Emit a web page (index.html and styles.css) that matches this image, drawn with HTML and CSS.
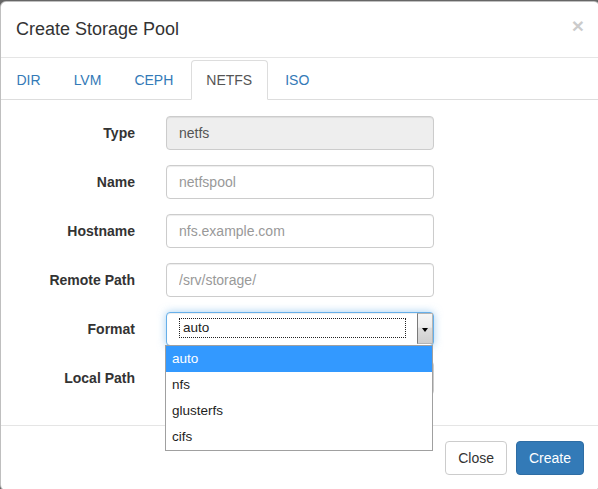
FILE: index.html
```html
<!DOCTYPE html>
<html>
<head>
<meta charset="utf-8">
<title>Create Storage Pool</title>
<link rel="stylesheet" href="styles.css">
</head>
<body>
<div class="modal">
  <div class="modal-header">
    <h4 class="modal-title">Create Storage Pool</h4>
    <span class="close">&times;</span>
  </div>
  <ul class="nav-tabs">
    <li><a href="#">DIR</a></li>
    <li><a href="#">LVM</a></li>
    <li><a href="#">CEPH</a></li>
    <li class="active"><a href="#">NETFS</a></li>
    <li><a href="#">ISO</a></li>
  </ul>
  <div class="modal-body">
    <div class="form-row">
      <label class="label">Type</label>
      <input class="input input-readonly" type="text" value="netfs" readonly>
    </div>
    <div class="form-row">
      <label class="label">Name</label>
      <input class="input" type="text" placeholder="netfspool">
    </div>
    <div class="form-row">
      <label class="label">Hostname</label>
      <input class="input" type="text" placeholder="nfs.example.com">
    </div>
    <div class="form-row">
      <label class="label">Remote Path</label>
      <input class="input" type="text" placeholder="/srv/storage/">
    </div>
    <div class="form-row">
      <label class="label">Format</label>
      <div class="field">
        <div class="select">
          <div class="select-value">auto</div>
          <div class="select-btn"><span class="caret"></span></div>
        </div>
        <ul class="dropdown">
          <li class="option option-active">auto</li>
          <li class="option">nfs</li>
          <li class="option">glusterfs</li>
          <li class="option">cifs</li>
        </ul>
      </div>
    </div>
    <div class="form-row">
      <label class="label">Local Path</label>
      <input class="input" type="text" placeholder="/mnt/netfs/">
    </div>
  </div>
  <div class="modal-footer">
    <button class="btn btn-default">Close</button>
    <button class="btn btn-primary">Create</button>
  </div>
</div>
</body>
</html>
```
FILE: styles.css
```css
html, body {
  margin: 0;
  padding: 0;
  overflow: hidden;
  background: #666666;
  font-family: "Liberation Sans", Arial, Helvetica, sans-serif;
  font-size: 14px;
  color: #333333;
}

.modal {
  box-sizing: border-box;
  width: 600px;
  margin-top: 1px;
  background: #ffffff;
  border: 1px solid rgba(0, 0, 0, 0.25);
  border-radius: 6px;
}

.modal-header {
  display: flex;
  justify-content: space-between;
  align-items: flex-start;
  padding: 15px 15px 14px 15px;
  border-bottom: 1px solid #e5e5e5;
}

.modal-title {
  margin: 0;
  font-size: 18px;
  font-weight: normal;
  line-height: 25.71px;
  color: #333333;
}

.close {
  font-size: 21px;
  font-weight: bold;
  line-height: 1;
  color: #000000;
  opacity: 0.2;
  margin-top: -2px;
}

.nav-tabs {
  display: flex;
  list-style: none;
  margin: 0;
  padding: 2px 0 0 0;
  border-bottom: 1px solid #dddddd;
}

.nav-tabs li {
  margin-bottom: -1px;
}

.nav-tabs a {
  display: block;
  padding: 10px 14.5px;
  line-height: 18px;
  margin-right: 2px;
  border: 1px solid transparent;
  border-radius: 4px 4px 0 0;
  color: #337ab7;
  text-decoration: none;
}

.nav-tabs .active a {
  color: #555555;
  background: #ffffff;
  border-color: #dddddd;
  border-bottom-color: transparent;
}

.modal-body {
  padding: 16px 15px 15px 15px;
}

.form-row {
  display: grid;
  grid-template-columns: 119px 268px;
  column-gap: 31px;
  margin-bottom: 15px;
}

.label {
  text-align: right;
  font-weight: bold;
  padding-top: 7px;
  line-height: 20px;
  color: #333333;
}

.input {
  box-sizing: border-box;
  width: 268px;
  height: 34px;
  margin: 0;
  padding: 6px 12px;
  font-family: "Liberation Sans", Arial, Helvetica, sans-serif;
  font-size: 14px;
  line-height: 20px;
  color: #555555;
  background: #ffffff;
  border: 1px solid #cccccc;
  border-radius: 4px;
  box-shadow: inset 0 1px 1px rgba(0, 0, 0, 0.075);
  outline: none;
}

.input::placeholder {
  color: #999999;
}

.input-readonly {
  background: #eeeeee;
  color: #555555;
}

.field {
  position: relative;
  height: 34px;
}

.select {
  box-sizing: border-box;
  display: flex;
  height: 34px;
  width: 268px;
  border: 1px solid #66afe9;
  border-radius: 4px;
  background: #ffffff;
  box-shadow: inset 0 1px 1px rgba(0, 0, 0, 0.075), 0 0 8px rgba(102, 175, 233, 0.6);
}

.select-value {
  flex: 1;
  align-self: flex-start;
  margin: 5px 11px 0 12px;
  padding-left: 3px;
  height: 18px;
  line-height: 18px;
  font-size: 13.5px;
  color: #222222;
  border: 1px dotted #222222;
}

.select-btn {
  box-sizing: border-box;
  width: 16px;
  height: 31px;
  display: flex;
  justify-content: center;
  align-items: flex-start;
  padding-top: 14px;
  border: 1px solid #b5b5b5;
  border-left-color: #7a7a7a;
  background: linear-gradient(#f6f6f6 0%, #ececec 45%, #dddddd 50%, #cfcfcf 100%);
}

.caret {
  width: 0;
  height: 0;
  border-left: 3.5px solid transparent;
  border-right: 3.5px solid transparent;
  border-top: 4px solid #000000;
}

.dropdown {
  position: absolute;
  z-index: 5;
  top: 33px;
  left: -1px;
  width: 268px;
  box-sizing: border-box;
  margin: 0;
  padding: 0;
  list-style: none;
  background: #ffffff;
  border: 1px solid #a0a0a0;
}

.option {
  height: 26px;
  line-height: 26px;
  padding-left: 6px;
  font-size: 13.5px;
  color: #1e1e1e;
}

.option-active {
  background: #3399ff;
  color: #ffffff;
}

.modal-footer {
  display: flex;
  justify-content: flex-end;
  gap: 9px;
  padding: 15px;
  border-top: 1px solid #e5e5e5;
}

.btn {
  font-family: "Liberation Sans", Arial, Helvetica, sans-serif;
  font-size: 14px;
  line-height: 20px;
  padding: 6px 12px;
  border: 1px solid transparent;
  border-radius: 4px;
  margin: 0;
}

.btn-default {
  color: #333333;
  background: #ffffff;
  border-color: #cccccc;
}

.btn-primary {
  color: #ffffff;
  background: #337ab7;
  border-color: #2e6da4;
}
```
